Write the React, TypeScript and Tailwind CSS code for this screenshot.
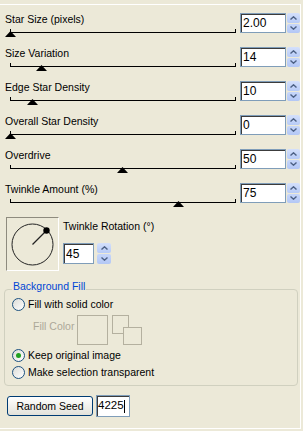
import React from 'react';

const sliders = [
  { label: 'Star Size (pixels)', value: '2.00', pos: 0 },
  { label: 'Size Variation', value: '14', pos: 14 },
  { label: 'Edge Star Density', value: '10', pos: 10 },
  { label: 'Overall Star Density', value: '0', pos: 0 },
  { label: 'Overdrive', value: '50', pos: 50 },
  { label: 'Twinkle Amount (%)', value: '75', pos: 75 },
];

function Spinner({ className }: { className: string }) {
  return (
    <div className={`flex flex-col gap-px ${className}`}>
      <div className="flex flex-1 items-center justify-center rounded-[2px] bg-gradient-to-b from-[#D4E0FB] to-[#B7CBF7]">
        <svg width="7" height="4" viewBox="0 0 7 4">
          <polyline points="0.5,3.5 3.5,0.8 6.5,3.5" fill="none" stroke="#4D6185" strokeWidth="1.4" />
        </svg>
      </div>
      <div className="flex flex-1 items-center justify-center rounded-[2px] bg-gradient-to-b from-[#C6D6FA] to-[#B3C7F5]">
        <svg width="7" height="4" viewBox="0 0 7 4">
          <polyline points="0.5,0.5 3.5,3.2 6.5,0.5" fill="none" stroke="#4D6185" strokeWidth="1.4" />
        </svg>
      </div>
    </div>
  );
}

function NumBox({ value, className }: { value: string; className: string }) {
  return (
    <div
      className={`flex items-center border border-[#7F9DB9] bg-white pl-[2px] text-[12px] shadow-[inset_1px_1px_0_#3C3C3C] ${className}`}
    >
      {value}
    </div>
  );
}

function SliderRow({ label, value, pos }: { label: string; value: string; pos: number }) {
  return (
    <div className="flex h-[34px]">
      <div className="w-[240px] pl-[5px]">
        <div className="mt-px h-[13px] leading-[13px]">{label}</div>
        <div className="relative ml-[5px] mt-[3px] h-[4px] w-[226px] border-x border-b border-black">
          <svg
            className="absolute top-[2px]"
            style={{ left: pos * 2.25 - 6.5 }}
            width="11"
            height="6"
            viewBox="0 0 11 6"
          >
            <polygon points="5.5,0 11,6 0,6" fill="#000" />
          </svg>
        </div>
      </div>
      <div className="mt-[1px] flex">
        <NumBox value={value} className="h-[20px] w-[46px]" />
        <Spinner className="ml-[1px] h-[20px] w-[13px]" />
      </div>
    </div>
  );
}

function Radio({ label, checked }: { label: string; checked?: boolean }) {
  return (
    <div className="flex h-[13px] items-center leading-[13px]">
      <span className="flex h-[13px] w-[13px] items-center justify-center rounded-full border border-[#1C5180] bg-gradient-to-br from-[#DCDCD7] to-white">
        {checked && <span className="h-[5px] w-[5px] rounded-full bg-[#21A121]" />}
      </span>
      <span className="ml-[3px]">{label}</span>
    </div>
  );
}

export default function App() {
  return (
    <div className="h-[431px] w-[303px] bg-[#ECE9D8] pt-[4px] font-['Liberation_Sans',Arial,sans-serif] text-[10.5px] text-black">
      <div className="h-[425px] w-[301px] border-y border-r border-white pt-[7px]">
        {sliders.map((s) => (
          <SliderRow key={s.label} {...s} />
        ))}

        <div className="mt-[1px] flex pl-[6px]">
          <div className="h-[54px] w-[53px] border border-b-white border-l-[#8E8B7E] border-r-white border-t-[#8E8B7E]">
            <svg width="51" height="52" viewBox="0 0 51 52">
              <circle cx="25.5" cy="26.5" r="20.5" fill="none" stroke="#222" strokeWidth="1" />
              <line x1="25.5" y1="26.5" x2="39.5" y2="12.5" stroke="#222" strokeWidth="1.2" />
              <circle cx="39.5" cy="12.5" r="3.2" fill="#000" />
            </svg>
          </div>
          <div className="ml-[4px] pt-[3px]">
            <div className="h-[13px] leading-[13px]">Twinkle Rotation (°)</div>
            <div className="mt-[10px] flex">
              <NumBox value="45" className="h-[21px] w-[31px]" />
              <Spinner className="ml-[3px] h-[21px] w-[14px]" />
            </div>
          </div>
        </div>

        <div className="relative ml-[4px] mt-[18px] h-[97px] w-[294px] rounded-[4px] border border-[#D0D0BF] pl-[7px] pt-[8px]">
          <span className="absolute -top-[10px] left-[7px] bg-[#ECE9D8] px-[1px] leading-[13px] text-[#0046D5]">
            Background Fill
          </span>
          <Radio label="Fill with solid color" />
          <div className="mt-[4px] flex h-[30px] items-start">
            <span className="ml-[21px] mt-[5px] w-[44px] leading-[13px] text-[#ACA899]">Fill Color</span>
            <div className="h-[30px] w-[31px] border border-[#B4B09F]" />
            <div className="relative ml-[4px] h-[30px] w-[30px]">
              <div className="absolute left-0 top-0 h-[19px] w-[17px] border border-[#B4B09F]" />
              <div className="absolute left-[11px] top-[12px] h-[18px] w-[19px] border border-[#B4B09F] bg-[#ECE9D8]" />
            </div>
          </div>
          <div className="mt-[4px]">
            <Radio label="Keep original image" checked />
          </div>
          <div className="mt-[4px]">
            <Radio label="Make selection transparent" />
          </div>
        </div>

        <div className="mt-[10px] flex items-start pl-[7px]">
          <button className="h-[20px] w-[86px] rounded-[3px] border border-[#003C74] bg-gradient-to-b from-white to-[#E3E2DA] leading-[18px]">
            Random Seed
          </button>
          <div className="-mt-[1px] ml-[3px] flex h-[22px] w-[34px] items-center border border-[#7F9DB9] bg-white pl-[1px] text-[11.5px] shadow-[inset_1px_1px_0_#3C3C3C]">
            4225
            <span className="inline-block h-[13px] w-px bg-black" />
          </div>
        </div>
      </div>
    </div>
  );
}
